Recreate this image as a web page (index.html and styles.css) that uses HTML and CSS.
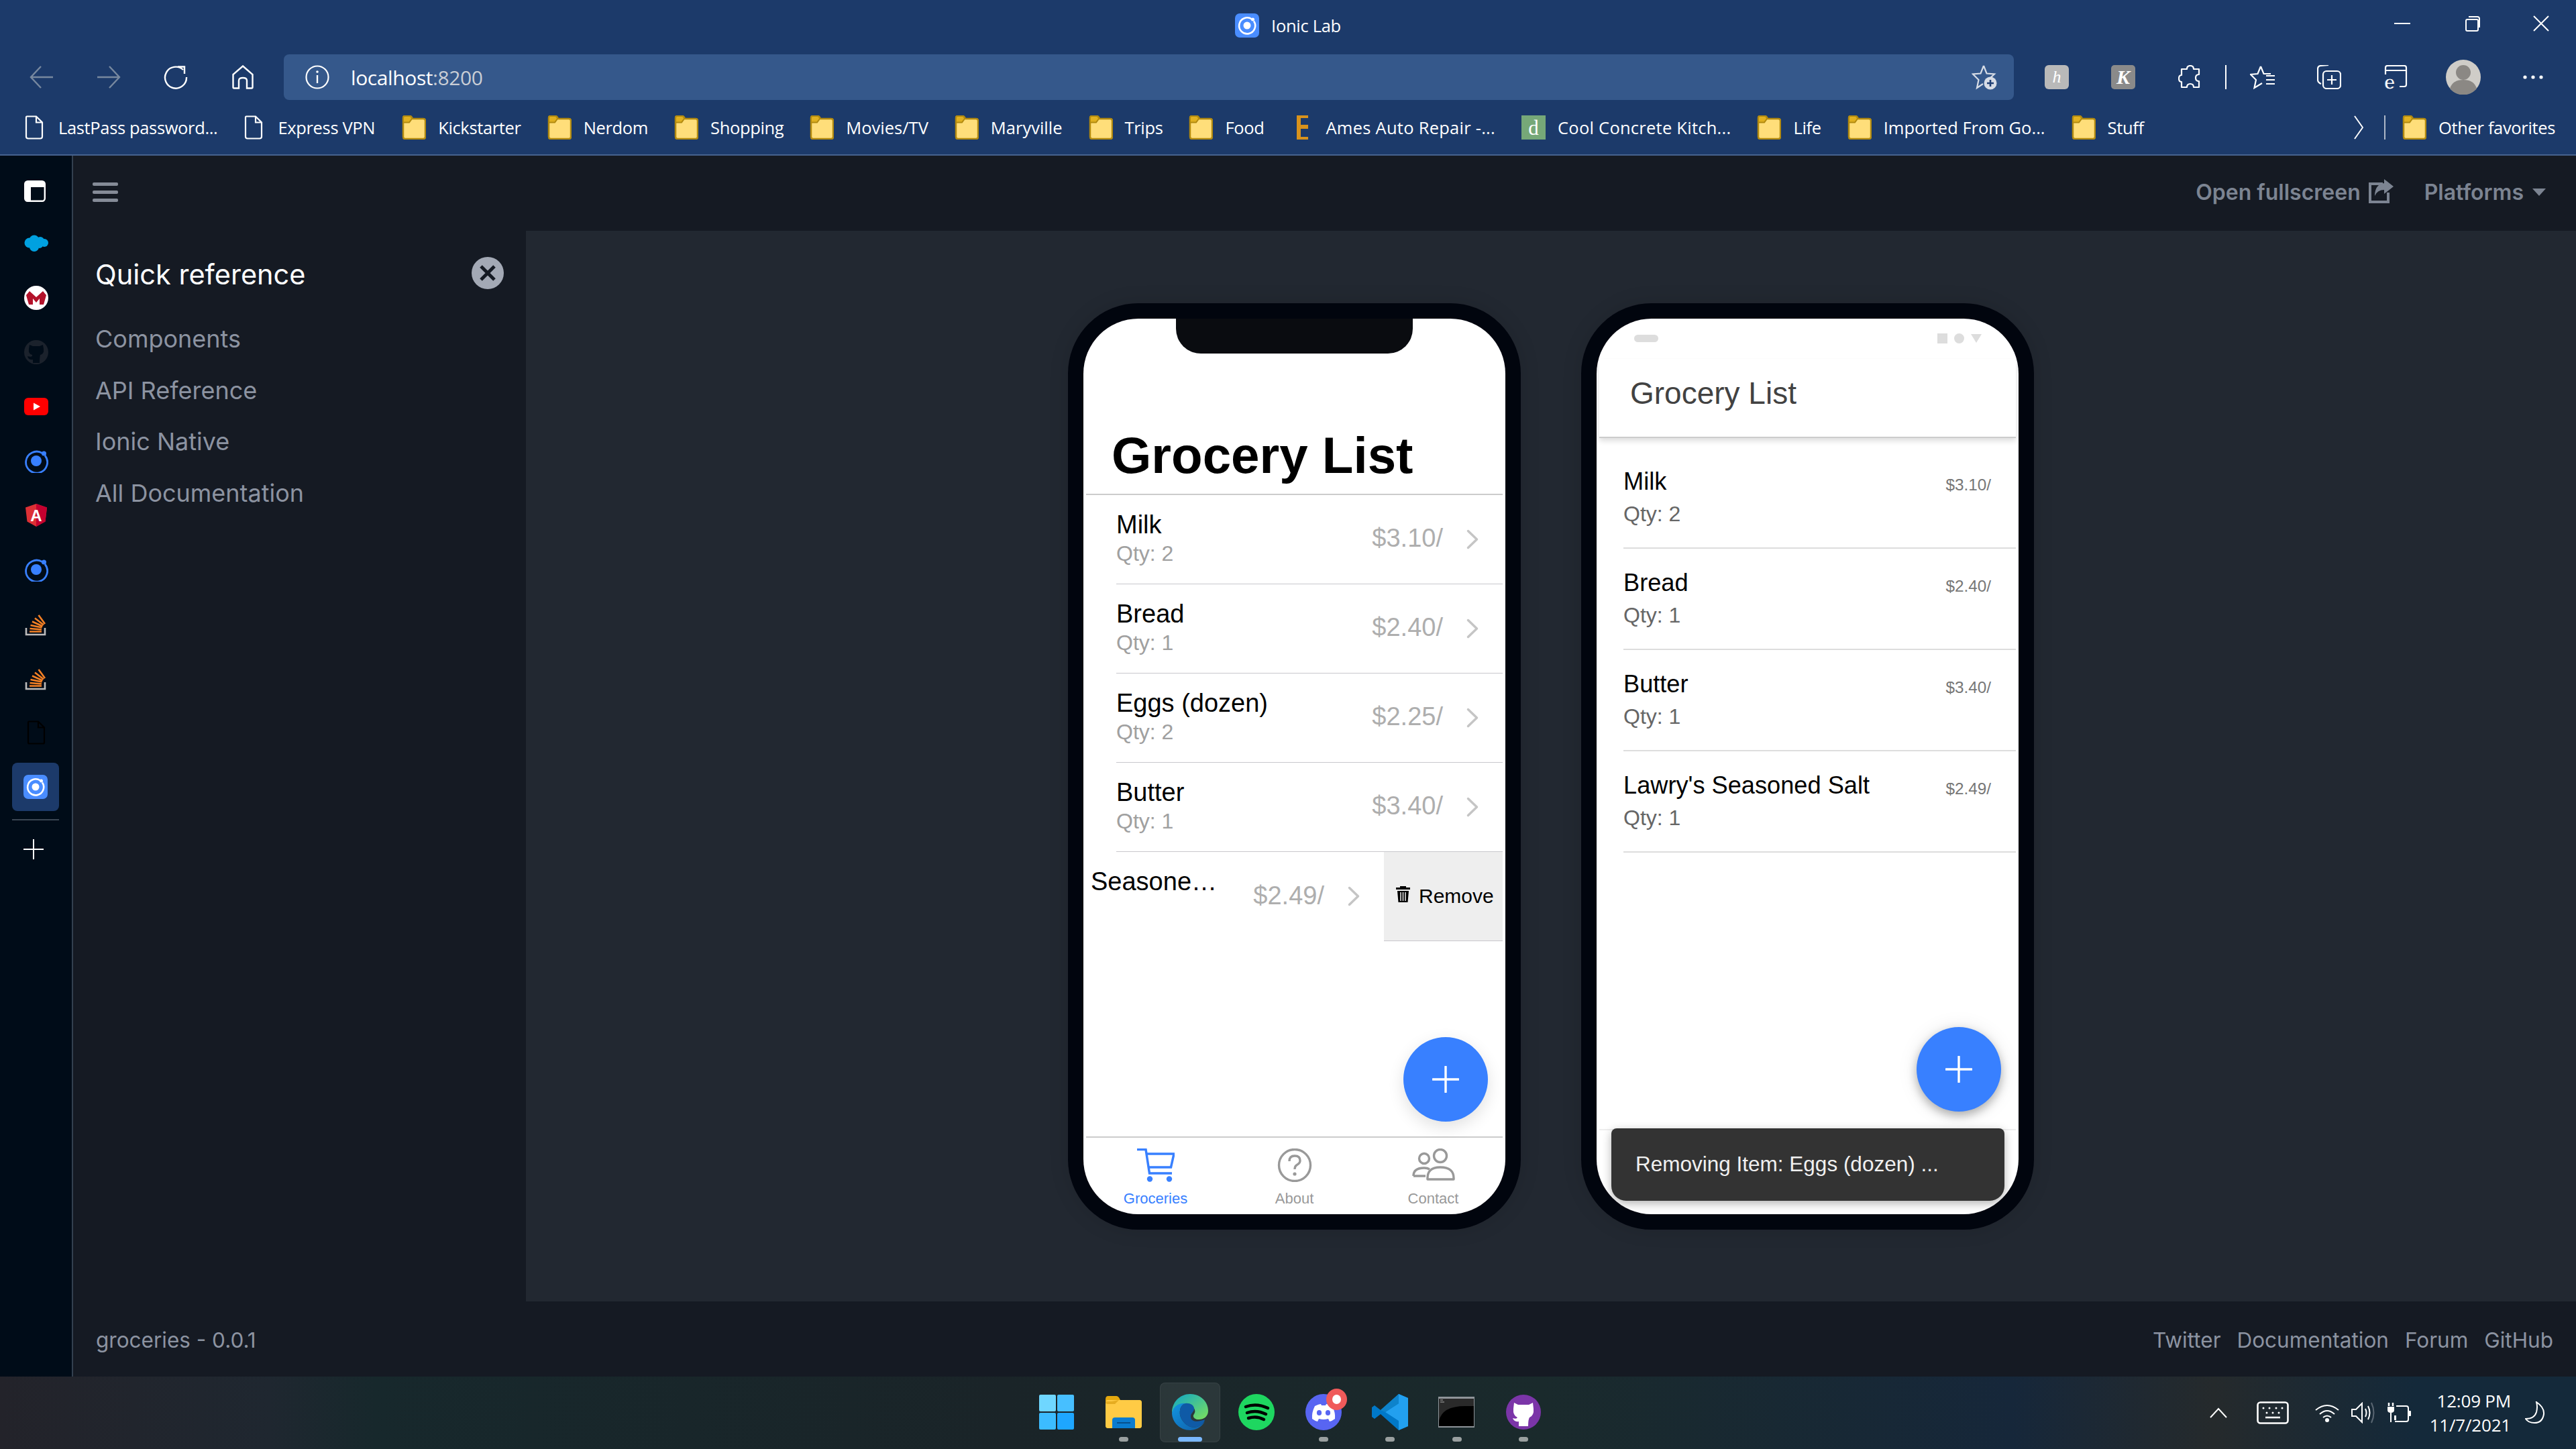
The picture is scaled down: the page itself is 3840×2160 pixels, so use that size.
FILE: index.html
```html
<!DOCTYPE html>
<html lang="en">
<head>
<meta charset="utf-8">
<title>Ionic Lab</title>
<link rel="stylesheet" href="styles.css">
</head>
<body>
<svg class="defs" xmlns="http://www.w3.org/2000/svg">
  <symbol id="folder" viewBox="0 0 36 36">
    <path d="M2 9V3.500Q2 1 4.500 1H12Q14 1 15 3L16 5H32Q35 5 35 8V32Q35 35 32 35H5Q2 35 2 32Z" fill="#ffde7a" stroke="#b28a10" stroke-width="2.500"/>
    <path d="M2 11V3.500Q2 1 4.500 1H11Q13.500 1 14.500 3L15 5L11 10.500H3Z" fill="#e0b020" stroke="#b28a10" stroke-width="2"/>
  </symbol>
  <symbol id="page" viewBox="0 0 28 36">
    <path d="M3 1.500H17L26 10.500V31.500Q26 34.500 23 34.500H5Q2 34.500 2 31.500V3.500Q2 1.500 3 1.500ZM17 1.500V10.500H26" fill="none" stroke="#fff" stroke-width="2.200"/>
  </symbol>
  <symbol id="ionic" viewBox="0 0 36 36">
    <circle cx="18" cy="18" r="8" fill="#3880ff"/>
    <path d="M27 6.500A16 16 0 1 0 31 10" fill="none" stroke="#3880ff" stroke-width="2.800"/>
    <circle cx="29.500" cy="7" r="3.500" fill="#3880ff"/>
  </symbol>
  <symbol id="ionicw" viewBox="0 0 36 36">
    <rect width="36" height="36" rx="7" fill="#4a8dff"/>
    <circle cx="18" cy="18" r="5.500" fill="#fff"/>
    <path d="M25 8.500A12 12 0 1 0 28 11.500" fill="none" stroke="#fff" stroke-width="2.600"/>
    <circle cx="26.500" cy="9" r="2.500" fill="#fff"/>
  </symbol>
  <symbol id="so" viewBox="0 0 36 36">
    <path d="M3 24V34H31V24" fill="none" stroke="#bcbbbb" stroke-width="2.600"/>
    <path d="M8 29.500H26M8.500 25L26 26.500M9.500 20L26.500 23.500M12 14.500L27.500 21.500M16 9.500L29 19.500M21.500 5L31 18" fill="none" stroke="#f48024" stroke-width="2.600"/>
  </symbol>
  <symbol id="chev" viewBox="0 0 18 30">
    <path d="M2.500 2.500L15.500 15L2.500 27.500" fill="none" stroke="#c5c5c5" stroke-width="3.500" stroke-linecap="round" stroke-linejoin="round"/>
  </symbol>
  <symbol id="plus" viewBox="0 0 40 40">
    <path d="M20 1V39M1 20H39" fill="none" stroke="#fff" stroke-width="3.400" stroke-linecap="round"/>
  </symbol>
</svg>

<header class="browser">
  <div class="titlebar">
    <div></div>
    <div class="wintitle">
      <svg class="wintitle-icon"><use href="#ionicw"/></svg>
      <span>Ionic Lab</span>
    </div>
    <div class="winctl">
      <button class="winbtn"><svg width="24" height="24" viewBox="0 0 24 24"><path d="M0 12H24" stroke="#fff" stroke-width="2"/></svg></button>
      <button class="winbtn"><svg width="24" height="24" viewBox="0 0 24 24"><path d="M5 6H19Q21 6 21 8V21Q21 23 19 23H5Q3 23 3 21V8Q3 6 5 6ZM7 2H20Q23 2 23 5V18" fill="none" stroke="#fff" stroke-width="2"/></svg></button>
      <button class="winbtn"><svg width="24" height="24" viewBox="0 0 24 24"><path d="M1 1L23 23M23 1L1 23" stroke="#fff" stroke-width="2"/></svg></button>
    </div>
  </div>
  <div class="toolbar">
    <button class="navbtn"><svg width="36" height="36" viewBox="0 0 36 36"><path d="M17 2L2 18L17 34M2 18H35" fill="none" stroke="#77889f" stroke-width="2.400"/></svg></button>
    <button class="navbtn"><svg width="36" height="36" viewBox="0 0 36 36"><path d="M19 2L34 18L19 34M34 18H1" fill="none" stroke="#77889f" stroke-width="2.400"/></svg></button>
    <button class="navbtn"><svg width="36" height="36" viewBox="0 0 36 36"><path d="M29 7A16 16 0 1 0 34 18M21 2.500H31V13" fill="none" stroke="#fff" stroke-width="2.400"/></svg></button>
    <button class="navbtn"><svg width="32" height="36" viewBox="0 0 32 36"><path d="M16 1.500L30.500 14V33Q30.500 34.500 29 34.500H22V23Q22 19 16 19Q10 19 10 23V34.500H3Q1.500 34.500 1.500 33V14Z" fill="none" stroke="#fff" stroke-width="2.400"/></svg></button>
    <div class="address">
      <svg width="36" height="36" viewBox="0 0 36 36"><circle cx="18" cy="18" r="16.500" fill="none" stroke="#fff" stroke-width="2.200"/><path d="M18 15V27" stroke="#fff" stroke-width="2.400"/><circle cx="18" cy="10" r="1.800" fill="#fff"/></svg>
      <span class="url">localhost<span class="url-port">:8200</span></span>
      <svg class="addr-star" width="38" height="38" viewBox="0 0 38 38"><path d="M18 2L22.500 13.500L34 14.500L26 22M18 2L13.500 13.500L2 14.500L10.500 23L8 35L17 29" fill="none" stroke="#d8dde6" stroke-width="2.200"/><circle cx="28" cy="28" r="9.500" fill="#d8dde6"/><path d="M28 23V33M23 28H33" stroke="#1f3f75" stroke-width="2.600"/></svg>
    </div>
    <div class="tools">
      <button class="tool"><svg width="36" height="36" viewBox="0 0 36 36"><rect width="36" height="36" rx="6" fill="#b9b9b9"/><text x="18" y="26" class="ext-h">h</text></svg></button>
      <button class="tool"><svg width="36" height="36" viewBox="0 0 36 36"><rect width="36" height="36" rx="5" fill="#8a8a8a"/><text x="18" y="28" class="ext-k">K</text></svg></button>
      <button class="tool"><svg width="34" height="36" viewBox="0 0 34 36"><path d="M13 6Q13 1 18 1Q23 1 23 6H31V14Q26 14 26 19Q26 24 31 24V33H23Q23 28 18 28Q13 28 13 33H5V25Q1 25 1 20Q1 15 5 15V6Z" fill="none" stroke="#fff" stroke-width="2.200" stroke-linejoin="round"/></svg></button>
      <span class="tool-sep"></span>
      <button class="tool"><svg width="38" height="36" viewBox="0 0 38 36"><path d="M16 2L20.500 13H31M16 2L11.500 13L1 14L9 22L6.500 34L18 27" fill="none" stroke="#fff" stroke-width="2.200"/><path d="M24 16H37M24 22H37M24 28H37" stroke="#fff" stroke-width="2.200"/></svg></button>
      <button class="tool"><svg width="36" height="36" viewBox="0 0 36 36"><path d="M6 28Q1 26 1 22V6Q1 1 6 1L17 0" fill="none" stroke="#fff" stroke-width="2.200"/><rect x="9" y="9" width="26" height="26" rx="5" fill="none" stroke="#fff" stroke-width="2.200"/><path d="M22 15V29M15 22H29" stroke="#fff" stroke-width="2.200"/></svg></button>
      <button class="tool"><svg class="ie-icon" width="36" height="44" viewBox="0 0 36 44"><path d="M3 14V4Q3 1 6 1H31Q34 1 34 4V29Q34 32 31 32H24M3 8H34" fill="none" stroke="#fff" stroke-width="2.200"/><text x="9" y="36" class="ext-e">e</text></svg></button>
      <button class="tool tool-wide"><svg width="52" height="52" viewBox="0 0 52 52"><circle cx="26" cy="26" r="26" fill="#cfcdc8"/><circle cx="26" cy="19" r="11" fill="#8b8884"/><path d="M6 43Q10 30 26 30Q42 30 46 43A26 26 0 0 1 6 43Z" fill="#8b8884"/></svg></button>
      <button class="tool tool-wide"><svg width="32" height="8" viewBox="0 0 32 8"><circle cx="4" cy="4" r="2.600" fill="#fff"/><circle cx="16" cy="4" r="2.600" fill="#fff"/><circle cx="28" cy="4" r="2.600" fill="#fff"/></svg></button>
    </div>
  </div>
  <nav class="bookmarks">
    <a class="bm bm-pg"><svg class="bm-page"><use href="#page"/></svg><span>LastPass password...</span></a>
    <a class="bm bm-pg"><svg class="bm-page"><use href="#page"/></svg><span>Express VPN</span></a>
    <a class="bm"><svg class="bm-folder"><use href="#folder"/></svg><span>Kickstarter</span></a>
    <a class="bm"><svg class="bm-folder"><use href="#folder"/></svg><span>Nerdom</span></a>
    <a class="bm"><svg class="bm-folder"><use href="#folder"/></svg><span>Shopping</span></a>
    <a class="bm bm-open"><svg class="bm-folder"><use href="#folder"/></svg><span>Movies/TV</span></a>
    <a class="bm bm-open"><svg class="bm-folder"><use href="#folder"/></svg><span>Maryville</span></a>
    <a class="bm"><svg class="bm-folder"><use href="#folder"/></svg><span>Trips</span></a>
    <a class="bm"><svg class="bm-folder"><use href="#folder"/></svg><span>Food</span></a>
    <a class="bm bm-wide"><svg class="bm-ames" viewBox="0 0 18 36"><path d="M1 0H18V4H7V14H18V20H7V32H18V36H1Z" fill="#d8921c"/></svg><span>Ames Auto Repair -...</span></a>
    <a class="bm bm-wide"><svg class="bm-cool" viewBox="0 0 36 36"><rect width="36" height="36" fill="#76a878"/><text x="18" y="29" class="fav-d">d</text></svg><span>Cool Concrete Kitch...</span></a>
    <a class="bm"><svg class="bm-folder"><use href="#folder"/></svg><span>Life</span></a>
    <a class="bm bm-open"><svg class="bm-folder"><use href="#folder"/></svg><span>Imported From Go...</span></a>
    <a class="bm"><svg class="bm-folder"><use href="#folder"/></svg><span>Stuff</span></a>
    <svg class="bm-more" width="14" height="36" viewBox="0 0 14 36"><path d="M1 1L13 18L1 35" fill="none" stroke="#fff" stroke-width="2"/></svg>
    <span class="bm-sep"></span>
    <a class="bm"><svg class="bm-folder"><use href="#folder"/></svg><span>Other favorites</span></a>
  </nav>
</header>

<main class="workspace">
  <aside class="rail">
    <div class="rail-row rail-first"><svg width="32" height="32" viewBox="0 0 32 32"><rect x="1.200" y="1.200" width="29.600" height="29.600" rx="4" fill="none" stroke="#fff" stroke-width="2.400"/><path d="M2 3Q2 2 4 2H28Q30 2 30 3V10H10V30H4Q2 30 2 28Z" fill="#fff"/></svg></div>
    <div class="rail-row"><svg width="36" height="26" viewBox="0 0 36 26"><g fill="#00a1e0"><circle cx="8" cy="12" r="7.500"/><circle cx="15" cy="8" r="7.500"/><circle cx="24" cy="9" r="6"/><circle cx="30" cy="12" r="6"/><circle cx="15" cy="18" r="7"/><circle cx="23" cy="15" r="5"/></g></svg></div>
    <div class="rail-row"><svg width="36" height="36" viewBox="0 0 36 36"><circle cx="18" cy="18" r="18" fill="#fff"/><path d="M3 14L8 8L18 17L28 8L33 14L29 28H23L23 19L18 25L13 19L13 28H7Z" fill="#b3122a"/></svg></div>
    <div class="rail-row"><svg width="36" height="36" viewBox="0 0 36 36"><circle cx="18" cy="18" r="18" fill="#1b222c"/><path d="M13 34V29Q6 30 5 24Q13 26 12 22Q6 21 7 13L8 7L13 9H23L28 7L29 13Q30 21 24 22Q23 26 23 34Z" fill="#000c18"/></svg></div>
    <div class="rail-row"><svg width="36" height="26" viewBox="0 0 36 26"><rect width="36" height="26" rx="6" fill="#f00"/><path d="M14 7.500L24 13L14 18.500Z" fill="#fff"/></svg></div>
    <div class="rail-row"><svg width="36" height="36"><use href="#ionic"/></svg></div>
    <div class="rail-row"><svg width="32" height="34" viewBox="0 0 32 34"><path d="M16 0L32 5.500L29.500 26.500L16 34L2.500 26.500L0 5.500Z" fill="#dd3035"/><path d="M16 0L32 5.500L29.500 26.500L16 34Z" fill="#c3002f"/><text x="16" y="25.500" class="fav-a">A</text></svg></div>
    <div class="rail-row"><svg width="36" height="36"><use href="#ionic"/></svg></div>
    <div class="rail-row"><svg width="36" height="36"><use href="#so"/></svg></div>
    <div class="rail-row"><svg width="36" height="36"><use href="#so"/></svg></div>
    <div class="rail-row"><svg width="28" height="36" viewBox="0 0 28 36"><path d="M3 1.500H17L26 10.500V33Q26 34.500 24 34.500H4Q2 34.500 2 33V3Q2 1.500 3 1.500ZM17 1.500V10.500H26" fill="none" stroke="#000" stroke-width="2.200"/></svg></div>
    <div class="rail-row rail-active"><span class="rail-box"><svg width="36" height="36"><use href="#ionicw"/></svg></span></div>
    <div class="rail-sep"></div>
    <div class="rail-add"><svg width="30" height="30" viewBox="0 0 30 30"><path d="M15 0V30M0 15H30" stroke="#fff" stroke-width="2"/></svg></div>
  </aside>

  <section class="lab">
    <div class="lab-head">
      <div class="burger"><i></i><i></i><i></i></div>
      <div class="lab-actions">
        <a class="lab-link">Open fullscreen<svg width="38" height="38" viewBox="0 0 38 38"><path d="M22 7H3V34H30V20" fill="none" stroke="#7c8492" stroke-width="4"/><path d="M24 0L38 11L24 22V16Q14 16 10 25Q10 8 24 6Z" fill="#7c8492"/></svg></a>
        <a class="lab-link lab-plat">Platforms<svg width="20" height="11" viewBox="0 0 20 11"><path d="M0 0H20L10 11Z" fill="#7c8492"/></svg></a>
      </div>
    </div>
    <div class="lab-body">
      <aside class="quick">
        <div class="quick-top">
          <h2 class="quick-title">Quick reference</h2>
          <span class="quick-close"><svg width="26" height="26" viewBox="0 0 26 26"><path d="M3 3L23 23M23 3L3 23" stroke="#151a23" stroke-width="5"/></svg></span>
        </div>
        <a class="quick-link">Components</a>
        <a class="quick-link">API Reference</a>
        <a class="quick-link">Ionic Native</a>
        <a class="quick-link">All Documentation</a>
      </aside>

      <div class="stage">
        <div class="phone">
          <div class="screen ios">
            <div class="notch"></div>
            <div class="ios-head"><h1 class="ios-title">Grocery List</h1></div>
            <div class="ios-list">
              <div class="ios-row"><div class="ios-in"><div class="names"><div class="name">Milk</div><div class="qty">Qty: 2</div></div><div class="price">$3.10/</div><svg class="chev"><use href="#chev"/></svg></div></div>
              <div class="ios-row"><div class="ios-in"><div class="names"><div class="name">Bread</div><div class="qty">Qty: 1</div></div><div class="price">$2.40/</div><svg class="chev"><use href="#chev"/></svg></div></div>
              <div class="ios-row"><div class="ios-in"><div class="names"><div class="name">Eggs (dozen)</div><div class="qty">Qty: 2</div></div><div class="price">$2.25/</div><svg class="chev"><use href="#chev"/></svg></div></div>
              <div class="ios-row"><div class="ios-in"><div class="names"><div class="name">Butter</div><div class="qty">Qty: 1</div></div><div class="price">$3.40/</div><svg class="chev"><use href="#chev"/></svg></div></div>
              <div class="ios-row ios-slid">
                <div class="slid-in"><div class="names"><div class="name">Seasone…</div></div><div class="price">$2.49/</div><svg class="chev"><use href="#chev"/></svg></div>
                <div class="remove"><svg class="trash" width="23" height="26" viewBox="0 0 23 26"><path d="M7 3V1H16V3H22V6H1V3ZM3 8H20L18.500 25H4.500Z" fill="#000"/><path d="M8 10V23M11.500 10V23M15 10V23" stroke="#eee" stroke-width="1.500"/></svg><span>Remove</span></div>
              </div>
            </div>
            <div class="fab fab-ios"><svg class="fab-plus"><use href="#plus"/></svg></div>
            <div class="tabs">
              <div class="tab tab-on"><svg width="56" height="50" viewBox="0 0 56 50"><path d="M0 1.500H13L18.500 37H52M14.500 8H55L50.500 28H17" fill="none" stroke="#3880ff" stroke-width="3.500"/><circle cx="19" cy="45.500" r="4.200" fill="#3880ff"/><circle cx="48" cy="45.500" r="4.200" fill="#3880ff"/></svg><span>Groceries</span></div>
              <div class="tab"><svg width="52" height="50" viewBox="0 0 52 50"><circle cx="26" cy="25" r="23.500" fill="none" stroke="#999" stroke-width="3.400"/><path d="M18 19Q18 11 26 11Q34 11 34 18Q34 22 30 24Q26 26 26 31" fill="none" stroke="#999" stroke-width="3.400"/><circle cx="26" cy="38" r="2.600" fill="#999"/></svg><span>About</span></div>
              <div class="tab"><svg width="64" height="50" viewBox="0 0 64 50"><circle cx="18" cy="15" r="7.500" fill="none" stroke="#999" stroke-width="3.400"/><circle cx="42" cy="11" r="9.500" fill="none" stroke="#999" stroke-width="3.400"/><path d="M2 41Q2 29 18 29Q23 29 26 31M2 41H20" fill="none" stroke="#999" stroke-width="3.400"/><path d="M23 46Q22 28 42 28Q63 28 62 46Z" fill="none" stroke="#999" stroke-width="3.400" stroke-linejoin="round"/></svg><span>Contact</span></div>
            </div>
          </div>
        </div>

        <div class="phone">
          <div class="screen md">
            <div class="md-status">
              <i class="st-pill"></i>
              <span class="st-right"><i class="st-sq"></i><i class="st-dot"></i><i class="st-tri"></i></span>
            </div>
            <div class="md-head"><h1 class="md-title">Grocery List</h1></div>
            <div class="md-list">
              <div class="md-row"><div class="md-in"><div class="md-names"><div class="md-name">Milk</div><div class="md-qty">Qty: 2</div></div><div class="md-price">$3.10/</div></div></div>
              <div class="md-row"><div class="md-in"><div class="md-names"><div class="md-name">Bread</div><div class="md-qty">Qty: 1</div></div><div class="md-price">$2.40/</div></div></div>
              <div class="md-row"><div class="md-in"><div class="md-names"><div class="md-name">Butter</div><div class="md-qty">Qty: 1</div></div><div class="md-price">$3.40/</div></div></div>
              <div class="md-row"><div class="md-in"><div class="md-names"><div class="md-name">Lawry's Seasoned Salt</div><div class="md-qty">Qty: 1</div></div><div class="md-price">$2.49/</div></div></div>
            </div>
            <div class="fab fab-md"><svg class="fab-plus"><use href="#plus"/></svg></div>
            <div class="md-tabs"></div>
            <div class="toast">Removing Item: Eggs (dozen) ...</div>
          </div>
        </div>
      </div>
    </div>
    <footer class="lab-foot">
      <span>groceries - 0.0.1</span>
      <nav class="foot-links"><a>Twitter</a><a>Documentation</a><a>Forum</a><a>GitHub</a></nav>
    </footer>
  </section>
</main>

<footer class="taskbar">
  <div></div>
  <div class="task-apps">
    <div class="app"><svg width="52" height="52" viewBox="0 0 52 52"><rect width="25" height="25" rx="2" fill="#6fd6ff"/><rect x="27" width="25" height="25" rx="2" fill="#47bfff"/><rect y="27" width="25" height="25" rx="2" fill="#3cbcff"/><rect x="27" y="27" width="25" height="25" rx="2" fill="#1ea6ff"/></svg></div>
    <div class="app app-run"><svg width="54" height="48" viewBox="0 0 54 48"><path d="M0 5Q0 0 4 0H16Q19 0 21 4L22 6H50Q54 6 54 10V44Q54 48 50 48H4Q0 48 0 44Z" fill="#e4a80e"/><path d="M0 10Q0 6 4 6H50Q54 6 54 10V44Q54 48 50 48H4Q0 48 0 44Z" fill="#ffcb45"/><path d="M9 8H0V10Q0 12 4 12H14L20 6Z" fill="#d59a0a" opacity=".6"/><path d="M10 48V36Q10 32 14 32H40Q44 32 44 36V48Z" fill="#0a7cd0"/><path d="M17 40H37" stroke="#07508c" stroke-width="2"/></svg></div>
    <div class="app app-edge">
      <svg width="54" height="54" viewBox="0 0 54 54"><defs><linearGradient id="edgeA" x1="0" y1="0" x2="1" y2="1"><stop offset="0" stop-color="#0ea5c8"/><stop offset="1" stop-color="#7ce05c"/></linearGradient><linearGradient id="edgeB" x1="0" y1="0" x2="1" y2="1"><stop offset="0" stop-color="#1295e0"/><stop offset="1" stop-color="#0f5da8"/></linearGradient></defs><path d="M27 0C42 0 54 11 54 25C54 34 47 38 40 38C33 38 30 33 33 30C35 27 35 24 32 20C28 15 18 13 10 17C4 20 1 26 0 28C0 12 12 0 27 0Z" fill="url(#edgeA)"/><path d="M0 28C2 18 11 13 20 14C13 16 11 24 12 31C14 42 27 54 40 48C44 46 47 44 49 41C44 50 35 54 27 54C12 54 0 42 0 28Z" fill="url(#edgeB)"/><path d="M20 14C28 13 34 18 33 23C32 28 28 28 28 34C28 41 37 43 49 38C48 43 45 46 40 48C27 54 14 42 12 31C11 24 13 16 20 14Z" fill="#0f5aa6"/></svg>
    </div>
    <div class="app"><svg width="54" height="54" viewBox="0 0 54 54"><circle cx="27" cy="27" r="27" fill="#1ed760"/><path d="M11 19Q27 13 44 21M13 28Q27 23 41 30M15 36Q27 32 38 38" fill="none" stroke="#000" stroke-width="4.500" stroke-linecap="round"/></svg></div>
    <div class="app app-run"><svg width="54" height="54" viewBox="0 0 54 54"><circle cx="27" cy="27" r="27" fill="#5865f2"/><path d="M14 18Q20 15 23 15L24 17H30L31 15Q34 15 40 18Q45 28 44 37Q40 40 36 41L34 37Q30 38 27 38Q24 38 20 37L18 41Q14 40 10 37Q9 28 14 18Z" fill="#fff"/><ellipse cx="20.500" cy="28" rx="3.600" ry="4" fill="#5865f2"/><ellipse cx="33.500" cy="28" rx="3.600" ry="4" fill="#5865f2"/></svg><span class="badge"></span></div>
    <div class="app app-run"><svg width="54" height="54" viewBox="0 0 54 54"><path d="M40 0L54 6V48L40 54L13 30L4 37L0 34V20L4 17L13 24Z" fill="#0078c8"/><path d="M40 0L54 6V48L40 54L40 14L20 27L40 40Z" fill="#22a0ef"/><path d="M40 0V14L20 27L13 24Z" fill="#0e83cb"/></svg></div>
    <div class="app app-run"><svg width="54" height="46" viewBox="0 0 54 46"><rect width="54" height="46" fill="#8f9499"/><rect x="1" y="3" width="52" height="41" fill="#000"/><path d="M1 36Q6 14 40 14H53V3H1Z" fill="#2a2a2a"/><path d="M3 5H7" stroke="#aaa" stroke-width="1"/><path d="M3 8H9" stroke="#aaa" stroke-width="1"/></svg></div>
    <div class="app app-run"><svg width="52" height="52" viewBox="0 0 52 52"><circle cx="26" cy="26" r="26" fill="#7b35a8"/><path d="M19 47V40Q12 41 10 35Q16 37 17 34Q10 31 11 21L12 12L18 15H34L40 12L41 21Q42 31 35 34Q33 37 33 47Z" fill="#fff"/></svg></div>
  </div>
  <div class="tray">
    <svg width="26" height="16" viewBox="0 0 26 16"><path d="M1 15L13 2L25 15" fill="none" stroke="#fff" stroke-width="2"/></svg>
    <svg class="tray-kb" width="48" height="34" viewBox="0 0 48 34"><rect x="1.500" y="1.500" width="45" height="31" rx="4" fill="none" stroke="#fff" stroke-width="2.600"/><path d="M13 24H35" stroke="#fff" stroke-width="2.600"/><g fill="#fff"><circle cx="10" cy="10" r="1.500"/><circle cx="19" cy="10" r="1.500"/><circle cx="29" cy="10" r="1.500"/><circle cx="38" cy="10" r="1.500"/><circle cx="15" cy="17" r="1.500"/><circle cx="24" cy="17" r="1.500"/><circle cx="33" cy="17" r="1.500"/></g></svg>
    <svg class="tray-wifi" width="36" height="30" viewBox="0 0 36 30"><path d="M1 11Q18 -3 35 11M7 17Q18 7 29 17M12 22Q18 17 24 22" fill="none" stroke="#fff" stroke-width="2"/><circle cx="18" cy="26" r="3" fill="#fff"/></svg>
    <svg class="tray-vol" width="36" height="32" viewBox="0 0 36 32"><path d="M1 11H7L16 2V30L7 21H1Z" fill="none" stroke="#fff" stroke-width="2"/><path d="M21 10Q24 16 21 22M25 6Q30 16 25 26" fill="none" stroke="#fff" stroke-width="2"/><path d="M30 1Q37 16 30 31" fill="none" stroke="#5a6672" stroke-width="2"/></svg>
    <svg class="tray-bat" width="36" height="32" viewBox="0 0 36 32"><path d="M2 1V6M8 1V6" stroke="#fff" stroke-width="2.500"/><path d="M0 7H10V12Q10 16 5 16Q0 16 0 12Z" fill="#fff"/><path d="M5 16V30" stroke="#fff" stroke-width="2"/><path d="M13 6H28Q31 6 31 9V26Q31 29 28 29H11" fill="none" stroke="#fff" stroke-width="2"/><rect x="31" y="13" width="4" height="8" rx="1" fill="#fff"/><path d="M10 20H13V27H10Z" fill="#fff"/></svg>
    <div class="clock"><span>12:09 PM</span><span>11/7/2021</span></div>
    <svg class="tray-moon" width="30" height="34" viewBox="0 0 30 34"><path d="M17 1Q29 9 28 19Q26 32 14 32Q5 32 1 26Q14 26 17 16Q19 8 17 1Z" fill="none" stroke="#fff" stroke-width="2"/></svg>
  </div>
</footer>
</body>
</html>
```

FILE: styles.css
```css
html, body {
  margin: 0;
  width: 3840px;
  height: 2160px;
  overflow: hidden;
}
body {
  display: flex;
  flex-direction: column;
  font-family: "Open Sans", "Liberation Sans", sans-serif;
  background: #151a23;
  color: #fff;
}
button {
  border: 0;
  background: none;
  padding: 0;
  display: flex;
  align-items: center;
  justify-content: center;
}
svg { display: block; flex: none; }
.defs { display: none; }
h1, h2 { margin: 0; }

/* browser chrome */
.browser {
  background: #1c3a6a;
  border-bottom: 2px solid #46628e;
  height: 232px;
  box-sizing: border-box;
  flex: none;
}
.titlebar {
  height: 81px;
  display: grid;
  grid-template-columns: 1fr auto 1fr;
  align-items: center;
}
.wintitle {
  display: flex;
  align-items: center;
  gap: 18px;
  font-size: 25.500px;
  letter-spacing: -.3px;
  margin-top: -5px;
}
.wintitle-icon { width: 36px; height: 36px; }
.winctl { display: flex; justify-content: flex-end; margin-top: -11px; }
.winbtn { width: 103.500px; height: 40px; }
.toolbar {
  height: 68px;
  display: flex;
  align-items: center;
  padding-left: 12px;
}
.navbtn { width: 100px; height: 68px; }
.address {
  margin-left: 11px;
  width: 2579px;
  height: 68px;
  background: #35588b;
  border-radius: 8px;
  display: flex;
  align-items: center;
  padding: 0 25px 0 32px;
  box-sizing: border-box;
}
.url { margin-left: 32px; font-size: 30px; letter-spacing: -.4px; }
.url-port { color: #c9ced6; }
.addr-star { margin-left: auto; }
.tools { display: flex; align-items: center; margin-left: 14px; }
.tool { width: 99px; height: 68px; }
.tool-wide { width: 104px; }
.tool-sep { width: 2px; height: 36px; background: #fff; margin: 0 4px; }
.ie-icon { margin-top: 8px; }
.ext-h { font: italic 26px "Liberation Serif", serif; fill: #fff; text-anchor: middle; }
.ext-k { font: italic bold 30px "Liberation Serif", serif; fill: #fff; text-anchor: middle; }
.ext-e { font: bold 30px "Liberation Sans", sans-serif; fill: #fff; stroke: #1c3a6a; stroke-width: 1px; text-anchor: middle; }
.bookmarks {
  height: 81px;
  display: flex;
  align-items: center;
  gap: 39px;
  padding: 0 31px 0 37px;
  font-size: 25.500px;
  letter-spacing: -.35px;
}
.bm { display: flex; align-items: center; gap: 18px; white-space: nowrap; }
.bm-pg { gap: 22px; margin-right: 1px; }
.bm-open { letter-spacing: 0; }
.bm-wide { letter-spacing: .25px; }
.bm-page { width: 28px; height: 36px; }
.bm-folder { width: 36px; height: 36px; }
.bm-ames { width: 18px; height: 36px; margin-left: 8px; margin-right: 9px; }
.bm-cool { width: 36px; height: 36px; }
.fav-d { font: 31px "Liberation Serif", serif; fill: #fff; text-anchor: middle; }
.bm-more { margin-left: auto; }
.bm-sep { width: 2px; height: 36px; background: #aeb8c8; margin: 0 -14px 0 -8px; }

/* workspace */
.workspace { flex: 1; display: flex; min-height: 0; }
.rail {
  width: 107px;
  flex: none;
  background: #000c18;
  border-right: 2px solid #33404f;
  padding-top: 12px;
}
.rail-row {
  height: 81px;
  display: flex;
  align-items: center;
  justify-content: center;
}
.rail-first { height: 78px; padding: 4px 4px 0 0; box-sizing: border-box; }
.rail-box {
  width: 70px;
  height: 72px;
  background: #1c3a6a;
  border-radius: 8px;
  display: flex;
  align-items: center;
  justify-content: center;
  margin-right: 2px;
}
.rail-sep { height: 2px; width: 70px; margin: 8px 0 0 18px; background: #3b4653; }
.rail-add { height: 86px; display: flex; align-items: center; padding-left: 35px; }
.fav-a { font: bold 24px "Liberation Sans", sans-serif; fill: #fff; text-anchor: middle; }

.lab { flex: 1; display: flex; flex-direction: column; min-width: 0; font-family: Inter, "Liberation Sans", sans-serif; }
.lab-head {
  height: 112px;
  flex: none;
  background: #151a23;
  display: flex;
  align-items: center;
  justify-content: space-between;
  padding: 0 45px 4px 29px;
  box-sizing: border-box;
}
.burger { width: 38px; display: flex; flex-direction: column; gap: 7px; }
.burger i { display: block; height: 5px; border-radius: 2px; background: #858b97; }
.lab-actions { display: flex; align-items: center; gap: 46px; }
.lab-link { display: flex; align-items: center; gap: 11px; font-size: 32px; font-weight: 600; color: #7c8492; }
.lab-plat { gap: 13px; }
.lab-body { flex: 1; display: flex; min-height: 0; }
.quick { width: 675px; flex: none; background: #151a23; padding: 40px 33px 0 33px; box-sizing: border-box; }
.quick-top { display: flex; justify-content: space-between; align-items: center; height: 50px; margin-bottom: 33px; }
.quick-title { font-size: 41.500px; font-weight: 400; color: #fff; }
.quick-close {
  width: 48px;
  height: 48px;
  border-radius: 50%;
  background: #a3a9b5;
  display: flex;
  align-items: center;
  justify-content: center;
  margin-top: -4px;
}
.quick-link { display: block; height: 76.500px; line-height: 76.500px; font-size: 36px; color: #8c93a1; }
.stage {
  flex: 1;
  background: #222831;
  display: flex;
  align-items: center;
  justify-content: center;
  gap: 90px;
}
.lab-foot {
  height: 112px;
  flex: none;
  background: #151a23;
  display: flex;
  align-items: center;
  justify-content: space-between;
  padding: 2px 34px 0 34px;
  box-sizing: border-box;
  font-size: 31.500px;
  color: #8c93a1;
}
.foot-links { display: flex; gap: 24px; }

/* phones */
.phone {
  width: 675px;
  height: 1381px;
  box-sizing: border-box;
  background: #01050e;
  border: 23px solid #01050e;
  border-radius: 105px;
  box-shadow: 0 0 30px rgba(0,0,0,.12);
  flex: none;
}
.screen {
  position: relative;
  width: 100%;
  height: 100%;
  background: #fff;
  border-radius: 82px;
  overflow: hidden;
  display: flex;
  flex-direction: column;
  font-family: "Liberation Sans", Arial, sans-serif;
  color: #000;
}
.notch {
  position: absolute;
  left: 138px;
  top: 0;
  width: 353px;
  height: 52px;
  background: #0a0c10;
  border-radius: 0 0 37px 37px;
}
.ios-head {
  height: 261px;
  flex: none;
  margin: 0 4px;
  border-bottom: 2px solid #ccc;
  display: flex;
  align-items: flex-end;
}
.ios-title { font-size: 76.300px; font-weight: 700; line-height: 90px; padding: 0 0 12px 38px; }
.ios-list { flex: 1; min-height: 0; }
.ios-row { height: 133px; padding: 0 4px 0 49px; box-sizing: border-box; display: flex; }
.ios-in {
  flex: 1;
  display: flex;
  align-items: center;
  padding-right: 36px;
  border-bottom: 1px solid #c8c7cc;
}
.names { flex: 1; min-width: 0; height: 132px; padding-top: 22px; box-sizing: border-box; }
.name { font-size: 38px; line-height: 44px; }
.qty { font-size: 32px; line-height: 42px; color: #a0a0a0; }
.price { font-size: 38px; color: #aeaeae; margin-top: -2px; }
.chev { width: 18px; height: 30px; margin-left: 35px; }
.ios-slid { padding: 0 4px 0 0; }
.slid-in { flex: 1; display: flex; align-items: center; padding: 0 36px 0 11px; }
.remove {
  width: 177px;
  display: flex;
  align-items: center;
  gap: 12px;
  padding-left: 17px;
  box-sizing: border-box;
  background: #eee;
  border-bottom: 1px solid #c8c7cc;
  font-size: 30px;
}
.trash { margin-bottom: 6px; }
.fab {
  position: absolute;
  width: 126px;
  height: 126px;
  border-radius: 50%;
  background: #3880ff;
  display: flex;
  align-items: center;
  justify-content: center;
}
.fab-ios { left: 477px; top: 1071px; box-shadow: 0 8px 24px rgba(0,0,0,.12); }
.fab-md { left: 477px; top: 1056px; box-shadow: 0 6px 14px rgba(0,0,0,.28), 0 2px 30px rgba(0,0,0,.1); }
.fab-plus { width: 40px; height: 40px; }
.tabs {
  height: 116px;
  flex: none;
  margin: 0 4px;
  border-top: 2px solid #ccc;
  box-sizing: border-box;
  display: grid;
  grid-template-columns: repeat(3, 1fr);
}
.tab {
  display: flex;
  flex-direction: column;
  align-items: center;
  padding-top: 16px;
  gap: 12px;
  font-size: 22px;
  color: #999;
}
.tab-on { color: #3880ff; }
.md-status {
  height: 60px;
  flex: none;
  display: flex;
  align-items: center;
  justify-content: space-between;
  padding: 0 55px 0 56px;
  box-sizing: border-box;
}
.st-pill { width: 36px; height: 11px; border-radius: 6px; background: #ddd; }
.st-right { display: flex; align-items: center; gap: 10px; }
.st-sq { width: 15px; height: 15px; background: #ddd; }
.st-dot { width: 15px; height: 15px; border-radius: 50%; background: #ddd; }
.st-tri { width: 0; height: 0; border: 8px solid transparent; border-top: 13px solid #ddd; border-bottom: 0; }
.md-head {
  height: 116px;
  flex: none;
  margin: 0 4px;
  display: flex;
  align-items: center;
  box-shadow: 0 2px 0 #ccc, 0 6px 8px rgba(0,0,0,.14);
  position: relative;
}
.md-title { font-size: 46px; font-weight: 400; line-height: 54px; color: #424242; padding: 0 0 14px 46px; }
.md-list { flex: 1; min-height: 0; padding-top: 16px; }
.md-row { height: 151px; padding: 0 4px 0 40px; box-sizing: border-box; display: flex; }
.md-in { flex: 1; display: flex; justify-content: space-between; border-bottom: 2px solid #ddd; padding-right: 37px; }
.md-names { padding-top: 29px; }
.md-name { font-size: 36.200px; line-height: 44px; }
.md-qty { font-size: 32px; line-height: 48px; margin-top: 2px; color: #666; }
.md-price { font-size: 24.300px; color: #777; padding-top: 42px; }
.md-tabs { height: 127px; flex: none; margin: 0 4px; border-top: 2px solid #eee; box-sizing: border-box; }
.toast {
  position: absolute;
  left: 22px;
  right: 21px;
  top: 1207px;
  height: 108px;
  display: flex;
  align-items: center;
  padding-left: 36px;
  box-sizing: border-box;
  background: #333;
  border-radius: 8px 8px 22px 22px;
  box-shadow: 0 4px 14px rgba(0,0,0,.3);
  color: #f0f0f0;
  font-size: 31.500px;
}

/* taskbar */
.taskbar {
  height: 108px;
  flex: none;
  display: grid;
  grid-template-columns: 1fr auto 1fr;
  background: linear-gradient(90deg, #23232a 0, #1f2730 400px, #17282c 560px, #1a2428 1500px, #1a2a2c 2300px, #16273a 3000px, #252a2c 3300px, #14293a 3600px, #14293a 100%);
}
.task-apps { display: flex; padding-left: 6px; }
.app {
  width: 99.300px;
  height: 108px;
  display: flex;
  align-items: center;
  justify-content: center;
  position: relative;
  padding-bottom: 3px;
  box-sizing: border-box;
}
.app-run::after {
  content: "";
  position: absolute;
  left: 43px;
  bottom: 11px;
  width: 14px;
  height: 7px;
  border-radius: 4px;
  background: #9aa0a0;
}
.app-edge::before {
  content: "";
  position: absolute;
  left: 5px;
  right: 5px;
  top: 9px;
  bottom: 10px;
  background: rgba(255,255,255,.08);
  border: 1px solid rgba(255,255,255,.06);
  border-radius: 8px;
}
.app-edge svg { position: relative; }
.app-edge::after {
  content: "";
  position: absolute;
  left: 32px;
  bottom: 11px;
  width: 36px;
  height: 7px;
  border-radius: 4px;
  background: #7ab8ff;
}
.badge {
  position: absolute;
  left: 54px;
  top: 18px;
  width: 31px;
  height: 32px;
  box-sizing: border-box;
  border: 9px solid #f05a5a;
  border-radius: 50%;
  background: #fff;
}
.tray { display: flex; align-items: center; justify-content: flex-end; padding-right: 46px; }
.tray-kb { margin-left: 44px; }
.tray-wifi { margin-left: 39px; }
.tray-vol { margin-left: 18px; }
.tray-bat { margin-left: 18px; }
.clock {
  margin-left: 27px;
  display: flex;
  flex-direction: column;
  align-items: flex-end;
  font-size: 26px;
  line-height: 36px;
  letter-spacing: -.2px;
}
.tray-moon { margin-left: 21px; }
```
